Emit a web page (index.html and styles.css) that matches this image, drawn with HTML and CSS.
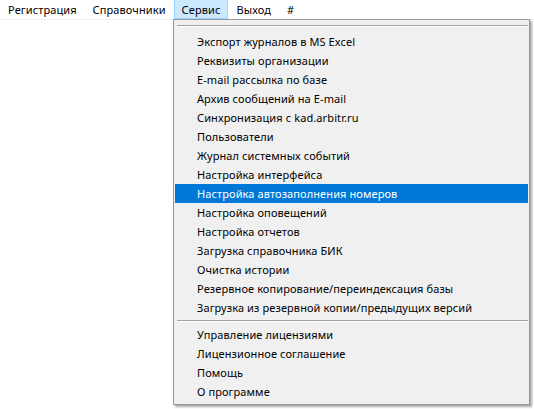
FILE: index.html
```html
<!DOCTYPE html>
<html lang="ru">
<head>
<meta charset="utf-8">
<link rel="stylesheet" href="styles.css">
</head>
<body>
<div class="menubar">
  <div class="mb-item">Регистрация</div>
  <div class="mb-item">Справочники</div>
  <div class="mb-item active">Сервис</div>
  <div class="mb-item">Выход</div>
  <div class="mb-item">#</div>
</div>
<div class="dropdown">
  <div class="sep top"></div>
  <div class="item">Экспорт журналов в MS Excel</div>
  <div class="item">Реквизиты организации</div>
  <div class="item">E-mail рассылка по базе</div>
  <div class="item">Архив сообщений на E-mail</div>
  <div class="item">Синхронизация с kad.arbitr.ru</div>
  <div class="item">Пользователи</div>
  <div class="item">Журнал системных событий</div>
  <div class="item">Настройка интерфейса</div>
  <div class="item hl">Настройка автозаполнения номеров</div>
  <div class="item">Настройка оповещений</div>
  <div class="item">Настройка отчетов</div>
  <div class="item">Загрузка справочника БИК</div>
  <div class="item">Очистка истории</div>
  <div class="item">Резервное копирование/переиндексация базы</div>
  <div class="item">Загрузка из резервной копии/предыдущих версий</div>
  <div class="sep"></div>
  <div class="item">Управление лицензиями</div>
  <div class="item">Лицензионное соглашение</div>
  <div class="item">Помощь</div>
  <div class="item">О программе</div>
</div>
</body>
</html>
```
FILE: styles.css
```css
html, body {
  margin: 0;
  padding: 0;
  background: #ffffff;
  font-family: "Noto Sans", "Open Sans", sans-serif;
  font-size: 11px;
  letter-spacing: 0.1px;
  color: #000000;
}
.menubar {
  display: flex;
  height: 19px;
  border-bottom: 1px solid #f0f0f0;
  position: relative;
}
.mb-item {
  padding: 0 7px;
  height: 19px;
  line-height: 19px;
  box-sizing: border-box;
  border: 1px solid transparent;
  border-top: none;
}
.mb-item.active {
  background: #cce8ff;
  border-color: #99d1ff;
}
.dropdown {
  position: absolute;
  left: 173px;
  top: 19px;
  width: 353px;
  background: #f0f0f0;
  border: 1px solid #979797;
  box-shadow: 2px 2px 2px rgba(0, 0, 0, 0.35);
  padding: 0 1px 3px 1px;
}
.sep {
  height: 1px;
  background: #a0a0a0;
  margin: 3px 0 3px 2px;
  border-bottom: 1px solid #ffffff;
}
.sep.top {
  margin: 5px 0 5px 2px;
}
.item {
  height: 19px;
  line-height: 19px;
  padding-left: 22px;
  white-space: nowrap;
}
.item.hl {
  background: #0078d7;
  color: #ffffff;
}
```
